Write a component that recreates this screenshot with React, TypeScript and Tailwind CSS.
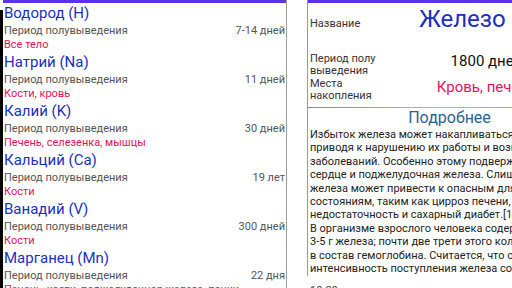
const elements = [
  { name: "Водород (H)", period: "7-14 дней", place: "Все тело" },
  { name: "Натрий (Na)", period: "11 дней", place: "Кости, кровь" },
  { name: "Калий (K)", period: "30 дней", place: "Печень, селезенка, мышцы" },
  { name: "Кальций (Ca)", period: "19 лет", place: "Кости" },
  { name: "Ванадий (V)", period: "300 дней", place: "Кости" },
  { name: "Марганец (Mn)", period: "22 дня", place: "Печень, кости, поджелудочная железа, почки" },
];

const details = [
  "Избыток железа может накапливаться в органах,",
  "приводя к нарушению их работы и возникновению",
  "заболеваний. Особенно этому подвержены печень,",
  "сердце и поджелудочная железа. Слишком много",
  "железа может привести к опасным для жизни",
  "состояниям, таким как цирроз печени, сердечная",
  "недостаточность и сахарный диабет.[1]",
  "В организме взрослого человека содержится",
  "3-5 г железа; почти две трети этого количества",
  "в состав гемоглобина. Считается, что оптимальная",
  "интенсивность поступления железа составляет",
];

function ElementRow({ name, period, place }: { name: string; period: string; place: string }) {
  return (
    <div className="flex flex-col h-[49px] shrink-0">
      <div className="text-[15px] leading-[20px] text-[#1a30c0]">{name}</div>
      <div className="flex justify-between text-[11px] leading-[15px] text-[#555] pr-[1px]">
        <span>Период полувыведения</span>
        <span>{period}</span>
      </div>
      <div className="text-[11px] leading-[14px] text-[#e3125c] whitespace-nowrap">{place}</div>
    </div>
  );
}

export default function App() {
  return (
    <div className="w-[512px] h-[288px] overflow-hidden bg-white flex font-['Roboto',sans-serif]">
      <div className="w-[3px] shrink-0 bg-black mt-[10px]" />

      <div className="w-[284px] shrink-0 flex flex-col border-r border-[#a0a0a0] overflow-hidden">
        <div className="h-[3px] bg-[#5c32e6] shrink-0" />
        <div className="flex flex-col pl-[1px]">
          {elements.map((e) => (
            <ElementRow key={e.name} {...e} />
          ))}
        </div>
      </div>

      <div className="w-[20px] shrink-0" />

      <div className="w-[284px] shrink-0 flex flex-col overflow-hidden">
        <div className="h-[276px] shrink-0 border-l border-[#9a9a9a] flex flex-col overflow-hidden">
          <div className="h-[3px] bg-[#5c32e6] shrink-0" />
          <div className="flex h-[50px] shrink-0 items-start pl-[2px]">
            <span className="w-[72px] text-[11px] leading-[13px] text-[#333] mt-[14px]">Название</span>
            <span className="flex-1 text-center text-[24px] leading-[28px] text-[#1a30c0] whitespace-nowrap mt-[2px]">
              Железо (Fe)
            </span>
          </div>
          <div className="flex pl-[2px] h-[54px] shrink-0">
            <div className="w-[72px] flex flex-col text-[11px] leading-[12.3px] text-[#333]">
              <span>Период полу</span>
              <span>выведения</span>
              <span>Места</span>
              <span>накопления</span>
            </div>
            <div className="flex-1 flex flex-col items-center text-[15px] leading-[16px] whitespace-nowrap">
              <span className="text-[#111]">1800 дней</span>
              <span className="text-[#e3125c] mt-[10px]">Кровь, печень</span>
            </div>
          </div>
          <div className="h-[1px] shrink-0 bg-gradient-to-r from-[#8a8a8a] via-[#c9c24a] to-[#8a8a8a]" />
          <div className="text-center text-[16px] leading-[20px] text-[#2b6294] shrink-0">Подробнее</div>
          <div className="flex flex-col pl-[2px] text-[11px] leading-[13.4px] text-[#222] whitespace-nowrap">
            {details.map((l) => (
              <span key={l}>{l}</span>
            ))}
          </div>
        </div>
        <div className="pl-[3px] mt-[8px] shrink-0 text-[11px] leading-[13.4px] text-[#444] whitespace-nowrap">
          10-20 мг железа в сутки
        </div>
      </div>
    </div>
  );
}
